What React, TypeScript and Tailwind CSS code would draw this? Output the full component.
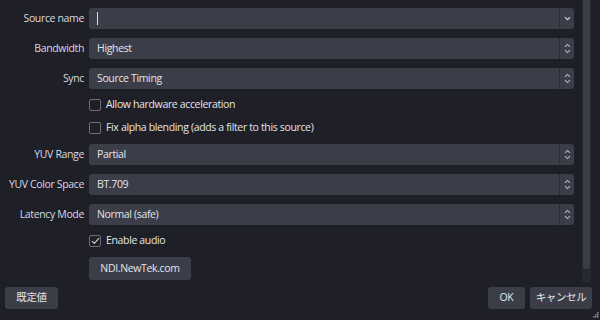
import React from 'react';

const font = { fontFamily: '"Open Sans", "Noto Sans CJK JP", sans-serif' };

function Arrows({ single }: { single?: boolean }) {
  return (
    <div className="flex w-[15px] items-center justify-center border-l border-[#2a2c35] self-stretch">
      {single ? (
        <svg width="7" height="5" viewBox="0 0 7 5" fill="none">
          <path d="M1 1.2 L3.5 3.6 L6 1.2" stroke="#c9cad2" strokeWidth="1.3" />
        </svg>
      ) : (
        <svg width="7" height="11" viewBox="0 0 7 11" fill="none">
          <path d="M1 3.8 L3.5 1.4 L6 3.8" stroke="#b8b9c2" strokeWidth="1.1" />
          <path d="M1 7.2 L3.5 9.6 L6 7.2" stroke="#b8b9c2" strokeWidth="1.1" />
        </svg>
      )}
    </div>
  );
}

function Combo({ value, single, caret }: { value?: string; single?: boolean; caret?: boolean }) {
  return (
    <div className="flex h-[21px] items-stretch rounded-[3px] bg-[#3b3d49]">
      <div className="flex flex-1 items-center pl-[8px] text-[#e4e5ea]">
        {caret ? <span className="h-[13px] w-px bg-[#d8d9de]" /> : value}
      </div>
      <Arrows single={single} />
    </div>
  );
}

function Check({ label, checked }: { label: string; checked?: boolean }) {
  return (
    <div className="flex h-[14px] items-center gap-[5px]">
      <div className="flex h-[12px] w-[12px] items-center justify-center rounded-[2px] border border-[#6c6e79]">
        {checked && (
          <svg width="9" height="8" viewBox="0 0 9 8" fill="none">
            <path d="M1 4.2 L3.3 6.5 L8 1.2" stroke="#c9cad2" strokeWidth="1.2" />
          </svg>
        )}
      </div>
      <span className="whitespace-nowrap text-[#e4e5ea]">{label}</span>
    </div>
  );
}

function Row({ label, children }: { label?: string; children: React.ReactNode }) {
  return (
    <div className="flex items-center">
      <div className="w-[84px] shrink-0 whitespace-nowrap text-right text-[#d9dae0]">{label}</div>
      <div className="ml-[5px] flex-1">{children}</div>
    </div>
  );
}

export default function App() {
  return (
    <div className="relative h-[320px] w-[600px] overflow-hidden bg-[#1e1f27] text-[10.5px] tracking-[-0.35px]" style={font}>
      <div className="flex h-[282px]">
        <div className="flex w-[574px] flex-col gap-[9px] pt-[8px]">
          <Row label="Source name"><Combo caret single /></Row>
          <Row label="Bandwidth"><Combo value="Highest" /></Row>
          <Row label="Sync"><Combo value="Source Timing" /></Row>
          <Row><Check label="Allow hardware acceleration" /></Row>
          <Row><Check label="Fix alpha blending (adds a filter to this source)" /></Row>
          <Row label="YUV Range"><Combo value="Partial" /></Row>
          <Row label="YUV Color Space"><Combo value="BT.709" /></Row>
          <Row label="Latency Mode"><Combo value="Normal (safe)" /></Row>
          <Row><Check label="Enable audio" checked /></Row>
          <Row>
            <button className="h-[23px] w-[102px] whitespace-nowrap rounded-[3px] bg-[#3b3d49] text-[#e4e5ea]">NDI.NewTek.com</button>
          </Row>
        </div>
        <div className="ml-[8px] w-[9px] bg-[#262832]">
          <div className="mx-auto h-[269px] w-[7px] rounded-b-[3px] bg-[#3b3d49]" />
        </div>
      </div>
      <div className="flex items-center px-[5px] pt-[5px]">
        <button className="h-[22px] w-[53px] whitespace-nowrap rounded-[3px] bg-[#3b3d49] text-[#e4e5ea]">既定値</button>
        <div className="flex-1" />
        <button className="h-[22px] w-[37px] rounded-[3px] bg-[#3b3d49] text-[#e4e5ea]">OK</button>
        <button className="ml-[5px] h-[22px] w-[62px] whitespace-nowrap rounded-[3px] bg-[#3b3d49] text-[#e4e5ea]">キャンセル</button>
        <div className="w-[3px]" />
      </div>
      <svg className="absolute bottom-[1px] right-[1px]" width="7" height="7" viewBox="0 0 7 7" fill="#8a8c96">
        <rect x="5" y="0" width="1.5" height="1.5" />
        <rect x="3" y="2" width="1.5" height="1.5" />
        <rect x="5" y="2" width="1.5" height="1.5" />
        <rect x="1" y="4" width="1.5" height="1.5" />
        <rect x="3" y="4" width="1.5" height="1.5" />
        <rect x="5" y="4" width="1.5" height="1.5" />
      </svg>
    </div>
  );
}
